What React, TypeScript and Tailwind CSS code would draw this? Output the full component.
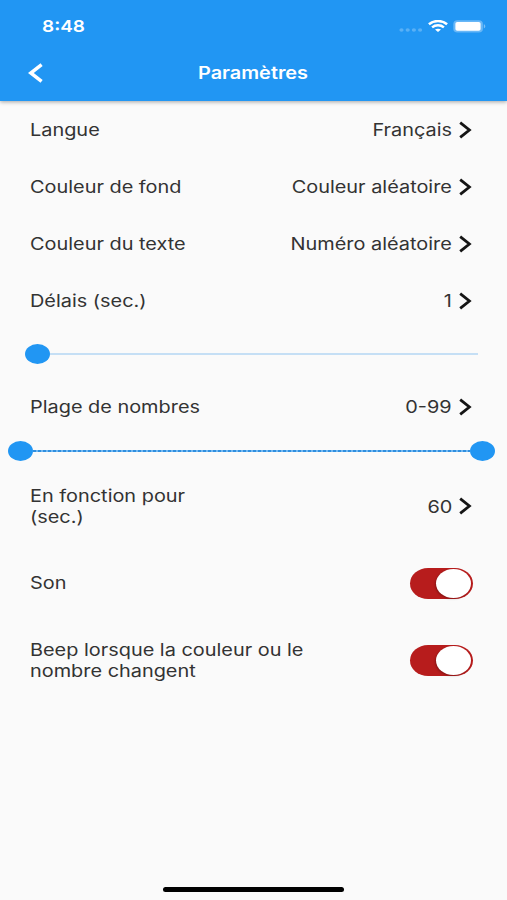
import React from 'react';

const Chevron = () => (
  <svg className="mb-[2px] w-[13px] h-[18px] shrink-0" viewBox="0 0 13 18" fill="none">
    <path d="M1.2 1.6L10.4 9L1.2 16.4" stroke="#151515" strokeWidth="2.8" />
  </svg>
);

const Label = ({ lines }: { lines: string[] }) => (
  <div className="origin-left scale-x-[1.17] whitespace-nowrap">
    {lines.map((line) => (
      <div key={line}>{line}</div>
    ))}
  </div>
);

const Value = ({ text }: { text: string }) => (
  <div className="flex items-center gap-[7px]">
    <span className="origin-right scale-x-[1.17] whitespace-nowrap">{text}</span>
    <Chevron />
  </div>
);

const Row = ({ lines, value }: { lines: string[]; value: string }) => (
  <div className="flex h-[57px] items-center justify-between pl-[30px] pr-[35px]">
    <Label lines={lines} />
    <Value text={value} />
  </div>
);

const Thumb = () => <div className="h-5 w-[25px] shrink-0 rounded-[50%] bg-[#2196f3]" />;

const Toggle = () => (
  <div className="flex h-[31px] w-[63px] items-center justify-end rounded-[18px/15.5px] bg-[#b71c1c] pr-[2px]">
    <div className="h-[29px] w-[35px] rounded-[50%] bg-white shadow-[-1px_1px_2px_rgba(0,0,0,0.25)]" />
  </div>
);

const StatusBar = () => (
  <div className="flex h-[52px] items-center justify-between pl-[42px] pr-[21px] text-white">
    <span className="origin-left scale-x-[1.15] text-[16.5px] font-semibold">8:48</span>
    <div className="flex items-center">
      <svg className="mt-2 h-1 w-6" viewBox="0 0 24 4" fill="#fff" fillOpacity="0.25">
        <ellipse cx="2.5" cy="2" rx="2.1" ry="1.8" />
        <ellipse cx="8.7" cy="2" rx="2.1" ry="1.8" />
        <ellipse cx="14.9" cy="2" rx="2.1" ry="1.8" />
        <ellipse cx="21.1" cy="2" rx="2.1" ry="1.8" />
      </svg>
      <svg className="ml-[5px] h-3 w-5" viewBox="0 0 20 12" fill="none" stroke="#fff" strokeWidth="2.5">
        <path d="M0.9 4.2C5.8 0 14.2 0 19.1 4.2" />
        <path d="M4.1 7.4C7.4 4.6 12.6 4.6 15.9 7.4" />
        <path d="M10 12L7 9.6C8.6 8.3 11.4 8.3 13 9.6Z" fill="#fff" stroke="none" />
      </svg>
      <svg className="ml-[5px] h-[13px] w-[33px]" viewBox="0 0 33 13">
        <rect x="0.3" y="0.3" width="29.6" height="12.2" rx="4.2" ry="3.8" fill="#fff" fillOpacity="0.32" />
        <rect x="2.4" y="2" width="25.2" height="8.8" rx="2" ry="1.7" fill="#fff" />
        <path d="M30.8 4.3C32.8 5 32.8 7.8 30.8 8.5Z" fill="#fff" fillOpacity="0.4" />
      </svg>
    </div>
  </div>
);

export default function App() {
  return (
    <div className="flex h-[900px] w-[507px] flex-col overflow-hidden bg-[#fafafa] font-['Inter','Liberation_Sans',sans-serif] text-[17px] leading-[21px] text-[#333]">
      <header className="h-[101px] shrink-0 bg-[#2196f3] shadow-[0_1px_4px_rgba(0,0,0,0.35)]">
        <StatusBar />
        <div className="grid h-[42px] grid-cols-[1fr_auto_1fr] items-center text-white">
          <svg className="ml-7 h-5 w-[15px]" viewBox="0 0 15 20" fill="none">
            <path d="M13.6 1.7L2.8 10L13.6 18.3" stroke="#fff" strokeWidth="3.5" />
          </svg>
          <h1 className="scale-x-[1.17] font-semibold">Paramètres</h1>
        </div>
      </header>

      <main className="flex-1 pt-px">
        <Row lines={['Langue']} value="Français" />
        <Row lines={['Couleur de fond']} value="Couleur aléatoire" />
        <Row lines={['Couleur du texte']} value="Numéro aléatoire" />
        <Row lines={['Délais (sec.)']} value="1" />
        <div className="mb-px flex h-12 items-center pl-[25px] pr-[29px]">
          <Thumb />
          <div className="h-[2px] flex-1 bg-[#c5dff5]" />
        </div>
        <Row lines={['Plage de nombres']} value="0-99" />
        <div className="flex h-[30px] items-center pl-2 pr-3">
          <Thumb />
          <div className="h-[2px] flex-1 bg-[repeating-linear-gradient(90deg,#2f8fdf_0_3px,#74b9f2_3px_5px)]" />
          <Thumb />
        </div>
        <div className="flex h-[79px] items-center justify-between pl-[30px] pr-[35px] pt-[3px]">
          <Label lines={['En fonction pour', '(sec.)']} />
          <Value text="60" />
        </div>
        <div className="flex h-[77px] items-center justify-between pl-[30px] pr-[34px]">
          <Label lines={['Son']} />
          <Toggle />
        </div>
        <div className="flex h-[77px] items-center justify-between pl-[30px] pr-[34px]">
          <Label lines={['Beep lorsque la couleur ou le', 'nombre changent']} />
          <Toggle />
        </div>
      </main>

      <div className="mx-auto mb-2 h-[5px] w-[181px] rounded-full bg-black" />
    </div>
  );
}
